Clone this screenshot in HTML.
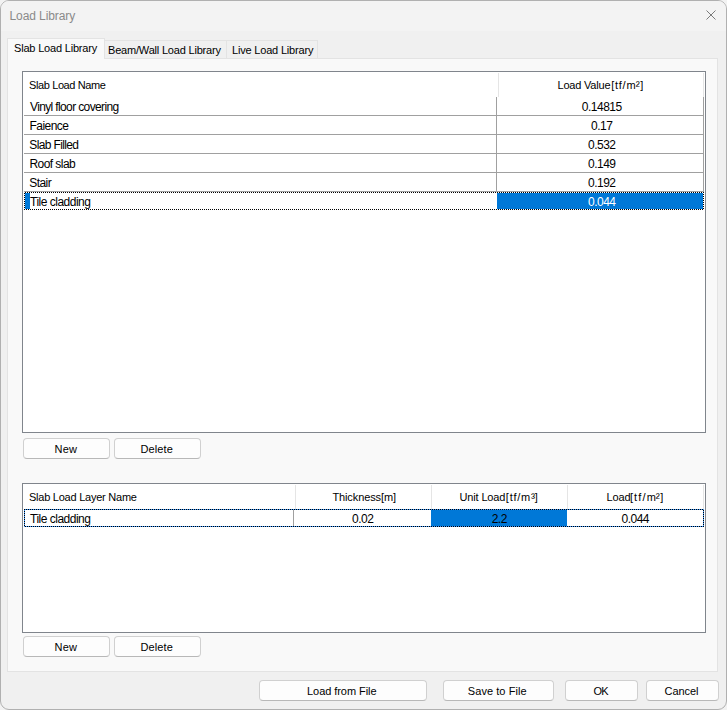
<!DOCTYPE html>
<html><head><meta charset="utf-8"><style>
html,body{margin:0;padding:0;}
body{width:727px;height:710px;overflow:hidden;position:relative;background:#f2f2f2;font-family:"Liberation Sans",sans-serif;font-size:11px;}
.win{position:absolute;left:0;top:0;width:727px;height:710px;box-sizing:border-box;border:1px solid #b0b0b0;border-radius:9px;background:#f0f0f0;}
.r{position:absolute;}
.t{position:absolute;white-space:nowrap;line-height:13px;}
.btn{position:absolute;box-sizing:border-box;border:1px solid #d0d0d0;border-bottom-color:#b8b8b8;border-radius:4px;background:#fdfdfd;}
</style></head><body>
<div class="win"></div><div class="r" style="left:1px;top:1px;width:725px;height:30px;background:#f3f3f3;border-radius:8px 8px 0 0"></div><div class="t" style="left:8.50px;top:10px;font-size:12px;letter-spacing:-0.091px;color:#8a8a8a;margin-left:1px">Load Library</div><svg class="r" style="left:705px;top:9px" width="12" height="12" viewBox="0 0 12 12"><path d="M1.5 1.5L10.5 10.5M10.5 1.5L1.5 10.5" stroke="#7a7a7a" stroke-width="1" fill="none"/></svg><div class="r" style="left:105px;top:40px;width:122px;height:19px;background:#f0f0f0;box-sizing:border-box;border:1px solid #e3e3e3;border-left:none"></div><div class="r" style="left:226px;top:40px;width:92px;height:19px;background:#f0f0f0;box-sizing:border-box;border:1px solid #e3e3e3"></div><div class="r" style="left:7px;top:58px;width:711px;height:614px;background:#f9f9f9;box-sizing:border-box;border:1px solid #e3e3e3"></div><div class="r" style="left:7px;top:38px;width:98px;height:21px;background:#f9f9f9;box-sizing:border-box;border:1px solid #e3e3e3;border-bottom:none"></div><div class="t" style="left:14.00px;top:42px;font-size:11px;letter-spacing:-0.188px;color:#000;">Slab Load Library</div><div class="t" style="left:108.00px;top:44px;font-size:11px;letter-spacing:-0.19px;color:#000;">Beam/Wall Load Library</div><div class="t" style="left:232.00px;top:44px;font-size:11px;letter-spacing:-0.188px;color:#000;">Live Load Library</div><div class="r" style="left:22px;top:71px;width:684px;height:362px;background:#fff;box-sizing:border-box;border:1px solid #80858c"></div><div class="r" style="left:498px;top:73px;width:1px;height:24px;background:#e5e5e5;"></div><div class="r" style="left:703px;top:73px;width:1px;height:24px;background:#e5e5e5;"></div><div class="t" style="left:29.00px;top:79px;font-size:11px;letter-spacing:-0.385px;color:#000;">Slab Load Name</div><div class="t" style="left:557.50px;top:79px;font-size:11px;letter-spacing:-0.2px;color:#000;">Load Value</div><div class="t" style="left:611.20px;top:79px;font-size:11px;letter-spacing:0.75px;color:#000;">[tf/m</div><div class="t" style="left:635.80px;top:80px;font-size:12px;letter-spacing:0.0px;color:#000;">²</div><div class="t" style="left:640.20px;top:79px;font-size:11px;letter-spacing:0.0px;color:#000;">]</div><div class="r" style="left:24px;top:115px;width:680px;height:1px;background:#a0a0a0;"></div><div class="r" style="left:496px;top:97px;width:1px;height:19px;background:#a0a0a0;"></div><div class="r" style="left:703px;top:97px;width:1px;height:19px;background:#a0a0a0;"></div><div class="t" style="left:30.00px;top:101px;font-size:12px;letter-spacing:-0.632px;color:#000;">Vinyl floor covering</div><div class="t" style="left:498.50px;top:101px;width:206px;text-align:center;font-size:12px;letter-spacing:-0.5px;text-indent:0.5px;color:#000">0.14815</div><div class="r" style="left:24px;top:134px;width:680px;height:1px;background:#a0a0a0;"></div><div class="r" style="left:496px;top:116px;width:1px;height:19px;background:#a0a0a0;"></div><div class="r" style="left:703px;top:116px;width:1px;height:19px;background:#a0a0a0;"></div><div class="t" style="left:29.50px;top:120px;font-size:12px;letter-spacing:-0.55px;color:#000;">Faience</div><div class="t" style="left:498.50px;top:120px;width:206px;text-align:center;font-size:12px;letter-spacing:-0.5px;text-indent:0.5px;color:#000">0.17</div><div class="r" style="left:24px;top:153px;width:680px;height:1px;background:#a0a0a0;"></div><div class="r" style="left:496px;top:135px;width:1px;height:19px;background:#a0a0a0;"></div><div class="r" style="left:703px;top:135px;width:1px;height:19px;background:#a0a0a0;"></div><div class="t" style="left:29.30px;top:139px;font-size:12px;letter-spacing:-0.63px;color:#000;">Slab Filled</div><div class="t" style="left:498.50px;top:139px;width:206px;text-align:center;font-size:12px;letter-spacing:-0.5px;text-indent:0.5px;color:#000">0.532</div><div class="r" style="left:24px;top:172px;width:680px;height:1px;background:#a0a0a0;"></div><div class="r" style="left:496px;top:154px;width:1px;height:19px;background:#a0a0a0;"></div><div class="r" style="left:703px;top:154px;width:1px;height:19px;background:#a0a0a0;"></div><div class="t" style="left:29.50px;top:158px;font-size:12px;letter-spacing:-0.562px;color:#000;">Roof slab</div><div class="t" style="left:498.50px;top:158px;width:206px;text-align:center;font-size:12px;letter-spacing:-0.5px;text-indent:0.5px;color:#000">0.149</div><div class="r" style="left:24px;top:191px;width:680px;height:1px;background:#a0a0a0;"></div><div class="r" style="left:496px;top:173px;width:1px;height:19px;background:#a0a0a0;"></div><div class="r" style="left:703px;top:173px;width:1px;height:19px;background:#a0a0a0;"></div><div class="t" style="left:29.20px;top:177px;font-size:12px;letter-spacing:-0.55px;color:#000;">Stair</div><div class="t" style="left:498.50px;top:177px;width:206px;text-align:center;font-size:12px;letter-spacing:-0.5px;text-indent:0.5px;color:#000">0.192</div><div class="r" style="left:25px;top:193px;width:5px;height:16px;background:#0078d7;"></div><div class="r" style="left:497px;top:193px;width:206px;height:16px;background:#0078d7;"></div><div class="r" style="left:24px;top:192px;width:680px;height:1px;background:repeating-linear-gradient(90deg,#000 0 1px,#fff 1px 2px);background-position:1px 0"></div><div class="r" style="left:24px;top:209px;width:680px;height:1px;background:repeating-linear-gradient(90deg,#000 0 1px,#fff 1px 2px);background-position:0px 0"></div><div class="r" style="left:24px;top:192px;width:1px;height:18px;background:repeating-linear-gradient(180deg,#000 0 1px,#fff 1px 2px);background-position:0 1px"></div><div class="r" style="left:703px;top:192px;width:1px;height:18px;background:repeating-linear-gradient(180deg,#000 0 1px,#fff 1px 2px);background-position:0 0px"></div><div class="t" style="left:30.00px;top:196px;font-size:12px;letter-spacing:-0.5px;color:#000;">Tile cladding</div><div class="t" style="left:498.50px;top:196px;width:206px;text-align:center;font-size:12px;letter-spacing:-0.5px;text-indent:0.5px;color:#fff">0.044</div><div class="btn" style="left:23px;top:438px;width:87px;height:21px;"></div><div class="t" style="left:54.40px;top:443px;font-size:11px;letter-spacing:0.3px;color:#000;">New</div><div class="btn" style="left:114px;top:438px;width:87px;height:21px;"></div><div class="t" style="left:140.50px;top:443px;font-size:11px;letter-spacing:0.1px;color:#000;">Delete</div><div class="r" style="left:22px;top:483px;width:684px;height:150px;background:#fff;box-sizing:border-box;border:1px solid #80858c"></div><div class="r" style="left:295px;top:485px;width:1px;height:24px;background:#e5e5e5;"></div><div class="r" style="left:431px;top:485px;width:1px;height:24px;background:#e5e5e5;"></div><div class="r" style="left:567px;top:485px;width:1px;height:24px;background:#e5e5e5;"></div><div class="r" style="left:703px;top:485px;width:1px;height:24px;background:#e5e5e5;"></div><div class="t" style="left:29.00px;top:491px;font-size:11px;letter-spacing:-0.242px;color:#000;">Slab Load Layer Name</div><div class="t" style="left:332.40px;top:491px;font-size:11px;letter-spacing:-0.1px;color:#000;">Thickness[m]</div><div class="t" style="left:459.60px;top:491px;font-size:11px;letter-spacing:-0.163px;color:#000;">Unit Load</div><div class="t" style="left:505.80px;top:491px;font-size:11px;letter-spacing:0.775px;color:#000;">[tf/m</div><div class="t" style="left:530.90px;top:492px;font-size:12px;letter-spacing:0.0px;color:#000;">³</div><div class="t" style="left:534.70px;top:491px;font-size:11px;letter-spacing:0.0px;color:#000;">]</div><div class="t" style="left:606.50px;top:491px;font-size:11px;letter-spacing:-0.1px;color:#000;">Load</div><div class="t" style="left:629.90px;top:491px;font-size:11px;letter-spacing:1.175px;color:#000;">[tf/m</div><div class="t" style="left:655.70px;top:492px;font-size:12px;letter-spacing:0.0px;color:#000;">²</div><div class="t" style="left:660.20px;top:491px;font-size:11px;letter-spacing:0.0px;color:#000;">]</div><div class="r" style="left:293px;top:510px;width:1px;height:16px;background:#a0a0a0;"></div><div class="r" style="left:431px;top:510px;width:136px;height:16px;background:#0078d7;"></div><div class="r" style="left:24px;top:509px;width:680px;height:1px;background:repeating-linear-gradient(90deg,#000 0 1px,#3d9bff 1px 2px);background-position:0px 0"></div><div class="r" style="left:24px;top:526px;width:680px;height:1px;background:repeating-linear-gradient(90deg,#000 0 1px,#3d9bff 1px 2px);background-position:1px 0"></div><div class="r" style="left:24px;top:509px;width:1px;height:18px;background:repeating-linear-gradient(180deg,#000 0 1px,#3d9bff 1px 2px);background-position:0 0px"></div><div class="r" style="left:703px;top:509px;width:1px;height:18px;background:repeating-linear-gradient(180deg,#000 0 1px,#3d9bff 1px 2px);background-position:0 1px"></div><div class="t" style="left:30.00px;top:513px;font-size:12px;letter-spacing:-0.5px;color:#000;">Tile cladding</div><div class="t" style="left:294.00px;top:513px;width:137px;text-align:center;font-size:12px;letter-spacing:-0.5px;text-indent:0.5px;color:#000">0.02</div><div class="t" style="left:431.00px;top:513px;width:136px;text-align:center;font-size:12px;letter-spacing:-0.5px;text-indent:0.5px;color:#000">2.2</div><div class="t" style="left:567.00px;top:513px;width:136px;text-align:center;font-size:12px;letter-spacing:-0.5px;text-indent:0.5px;color:#000">0.044</div><div class="btn" style="left:23px;top:636px;width:87px;height:21px;"></div><div class="t" style="left:54.40px;top:641px;font-size:11px;letter-spacing:0.3px;color:#000;">New</div><div class="btn" style="left:114px;top:636px;width:87px;height:21px;"></div><div class="t" style="left:140.50px;top:641px;font-size:11px;letter-spacing:0.1px;color:#000;">Delete</div><div class="btn" style="left:259px;top:680px;width:168px;height:21px;"></div><div class="t" style="left:307.00px;top:685px;font-size:11px;letter-spacing:-0.054px;color:#000;">Load from File</div><div class="btn" style="left:443px;top:680px;width:111px;height:21px;"></div><div class="t" style="left:467.80px;top:685px;font-size:11px;letter-spacing:0.064px;color:#000;">Save to File</div><div class="btn" style="left:565px;top:680px;width:73px;height:21px;"></div><div class="t" style="left:593.40px;top:685px;font-size:11px;letter-spacing:-0.7px;color:#000;">OK</div><div class="btn" style="left:646px;top:680px;width:73px;height:21px;"></div><div class="t" style="left:664.50px;top:685px;font-size:11px;letter-spacing:-0.06px;color:#000;">Cancel</div>
</body></html>
